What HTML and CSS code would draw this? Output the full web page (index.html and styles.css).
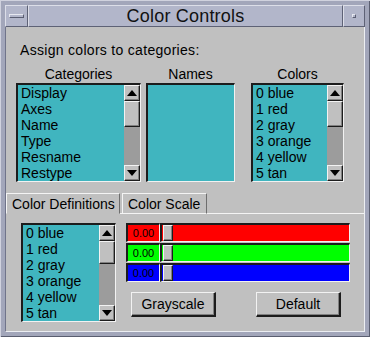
FILE: index.html
```html
<!DOCTYPE html>
<html>
<head>
<meta charset="utf-8">
<title>Color Controls</title>
<link rel="stylesheet" href="styles.css">
</head>
<body>
<div class="frame">
  <div class="titlebar">
    <div class="tb-btn tb-left"><span class="minbar"></span></div>
    <div class="tb-title">Color Controls</div>
    <div class="tb-btn tb-right"><span class="maxsq"></span></div>
  </div>
  <div class="content">
    <div class="prompt">Assign colors to categories:</div>
    <div class="lists">
      <div class="col col-cat">
        <div class="lbl">Categories</div>
        <div class="listbox lb-cat">
          <ul class="items">
            <li>Display</li><li>Axes</li><li>Name</li><li>Type</li><li>Resname</li><li>Restype</li>
          </ul>
          <div class="sb">
            <div class="sb-arrow"><svg width="10" height="6" viewBox="0 0 10 6"><polygon points="0,6 10,6 5,0"/></svg></div>
            <div class="sb-track"><div class="sb-thumb"></div></div>
            <div class="sb-arrow"><svg width="10" height="6" viewBox="0 0 10 6"><polygon points="0,0 10,0 5,6"/></svg></div>
          </div>
        </div>
      </div>
      <div class="col col-names">
        <div class="lbl">Names</div>
        <div class="listbox lb-names"></div>
      </div>
      <div class="col col-colors">
        <div class="lbl">Colors</div>
        <div class="listbox lb-colors">
          <ul class="items">
            <li>0 blue</li><li>1 red</li><li>2 gray</li><li>3 orange</li><li>4 yellow</li><li>5 tan</li>
          </ul>
          <div class="sb">
            <div class="sb-arrow"><svg width="10" height="6" viewBox="0 0 10 6"><polygon points="0,6 10,6 5,0"/></svg></div>
            <div class="sb-track"><div class="sb-thumb"></div></div>
            <div class="sb-arrow"><svg width="10" height="6" viewBox="0 0 10 6"><polygon points="0,0 10,0 5,6"/></svg></div>
          </div>
        </div>
      </div>
    </div>
    <div class="tabbar">
      <div class="tab tab-active">Color Definitions</div>
      <div class="tab-gap"></div>
      <div class="tab">Color Scale</div>
      <div class="tab-fill"></div>
    </div>
    <div class="defs">
      <div class="listbox lb-defs">
        <ul class="items">
          <li>0 blue</li><li>1 red</li><li>2 gray</li><li>3 orange</li><li>4 yellow</li><li>5 tan</li>
        </ul>
        <div class="sb">
          <div class="sb-arrow"><svg width="10" height="6" viewBox="0 0 10 6"><polygon points="0,6 10,6 5,0"/></svg></div>
          <div class="sb-track"><div class="sb-thumb sb-thumb-sm"></div></div>
          <div class="sb-arrow"><svg width="10" height="6" viewBox="0 0 10 6"><polygon points="0,0 10,0 5,6"/></svg></div>
        </div>
      </div>
      <div class="editor">
        <div class="sliders">
          <div class="srow s-red"><div class="val">0.00</div><div class="track"><div class="thumb"></div></div></div>
          <div class="srow s-green"><div class="val">0.00</div><div class="track"><div class="thumb"></div></div></div>
          <div class="srow s-blue"><div class="val">0.00</div><div class="track"><div class="thumb"></div></div></div>
        </div>
        <div class="btns">
          <button class="btn">Grayscale</button>
          <button class="btn">Default</button>
        </div>
      </div>
    </div>
  </div>
</div>
</body>
</html>
```

FILE: styles.css
```css
* {
  box-sizing: border-box;
  margin: 0;
  padding: 0;
}

html, body {
  width: 370px;
  height: 337px;
  overflow: hidden;
}

body {
  background: #a2a6ba;
  font-family: "Liberation Sans", Arial, sans-serif;
  font-size: 14px;
  color: #000;
}

.frame {
  width: 370px;
  height: 337px;
  padding: 5px;
  display: flex;
  flex-direction: column;
  background: #a2a6ba;
  box-shadow: inset 1px 1px 0 #d0d2de, inset -1px -1px 0 #5a5e70;
}

/* title bar */
.titlebar {
  height: 22px;
  flex: none;
  display: flex;
}

.tb-btn,
.tb-title {
  background: #b2b6ca;
  border: 1px solid;
  border-color: #dcdee8 #5e6276 #5e6276 #dcdee8;
}

.tb-left {
  width: 23px;
  display: flex;
  align-items: center;
  justify-content: center;
}

.tb-right {
  width: 22px;
  display: flex;
  align-items: center;
  justify-content: center;
}

.minbar {
  width: 15px;
  height: 4px;
  border: 1px solid;
  border-color: #e6e8f0 #5a5e72 #5a5e72 #e6e8f0;
}

.maxsq {
  width: 4px;
  height: 4px;
  border: 1px solid;
  border-color: #e6e8f0 #5a5e72 #5a5e72 #e6e8f0;
}

.tb-title {
  flex: 1;
  text-align: center;
  font-size: 18px;
  line-height: 20px;
  letter-spacing: 0.2px;
  color: #111;
}

/* content */
.content {
  flex: 1;
  background: #c0c0c0;
  border-left: 1px solid #70748a;
  border-right: 1px solid #eceef2;
  border-bottom: 1px solid #eceef2;
  display: flex;
  flex-direction: column;
}

.prompt {
  margin-top: 15px;
  padding-left: 14px;
  line-height: 16px;
  letter-spacing: 0.3px;
}

.lists {
  margin-top: 8px;
  padding-left: 10px;
  display: flex;
}

.col {
  display: flex;
  flex-direction: column;
}

.col-cat { width: 125px; }
.col-names { width: 89px; margin-left: 5px; }
.col-colors { width: 93px; margin-left: 16px; }

.lbl {
  text-align: center;
  line-height: 16px;
  margin-bottom: 1px;
}

.listbox {
  height: 99px;
  display: flex;
  background: #40b5bf;
  border-style: solid;
  border-width: 2px 1px 1px 2px;
  border-color: #1c1c1c #f2f2f2 #f2f2f2 #1c1c1c;
  overflow: hidden;
}

.items {
  list-style: none;
  flex: 1;
  padding-left: 3px;
  overflow: hidden;
}

.items li {
  line-height: 16px;
  white-space: nowrap;
}

/* scrollbar */
.sb {
  width: 16px;
  flex: none;
  display: flex;
  flex-direction: column;
  background: #9c9c9c;
}

.sb-arrow {
  height: 16px;
  flex: none;
  background: #c0c0c0;
  border: 1px solid;
  border-color: #f2f2f2 #1c1c1c #1c1c1c #f2f2f2;
  box-shadow: inset -1px -1px 0 #808080;
  display: flex;
  align-items: center;
  justify-content: center;
}

.sb-arrow svg {
  fill: #000;
}

.sb-track {
  flex: 1;
}

.sb-thumb {
  height: 26px;
  background: #c0c0c0;
  border: 1px solid;
  border-color: #f2f2f2 #1c1c1c #1c1c1c #f2f2f2;
  box-shadow: inset -1px -1px 0 #808080;
}

.sb-thumb-sm {
  height: 23px;
}

/* tabs */
.tabbar {
  margin-top: 11px;
  display: flex;
  align-items: flex-end;
  height: 21px;
}

.tab {
  height: 21px;
  padding: 2px 5px 0 5px;
  line-height: 16px;
  white-space: nowrap;
  border-style: solid;
  border-width: 1px 1px 1px 1px;
  border-color: #f4f4f4 #6e6e6e #f4f4f4 #f4f4f4;
}

.tab-active {
  width: 114px;
  border-bottom-color: #c0c0c0;
}

.tab + .tab-gap + .tab {
  width: 85px;
}

.tab-gap {
  width: 2px;
  height: 1px;
  background: #f4f4f4;
}

.tab-fill {
  flex: 1;
  height: 1px;
  background: #f4f4f4;
}

/* definitions */
.defs {
  margin-top: 9px;
  padding-left: 15px;
  display: flex;
}

.lb-defs {
  width: 95px;
}

.editor {
  margin-left: 10px;
  width: 224px;
  display: flex;
  flex-direction: column;
}

.sliders {
  display: flex;
  flex-direction: column;
  gap: 1px;
}

.srow {
  height: 19px;
  display: flex;
}

.val {
  width: 34px;
  font-size: 11px;
  line-height: 16px;
  text-align: center;
  color: #000;
  border-style: solid;
  border-width: 2px 1px 1px 2px;
  border-color: #1c1c1c #f2f2f2 #f2f2f2 #1c1c1c;
}

.track {
  flex: 1;
  padding: 0 0 0 1px;
  border-style: solid;
  border-width: 2px 1px 1px 2px;
  border-color: #1c1c1c #f2f2f2 #f2f2f2 #1c1c1c;
}

.s-red .val, .s-red .track { background: #ff0000; }
.s-green .val, .s-green .track { background: #00ff00; }
.s-blue .val, .s-blue .track { background: #0000ff; }

.thumb {
  width: 10px;
  height: 16px;
  background: #c0c0c0;
  border: 1px solid;
  border-color: #f2f2f2 #1c1c1c #1c1c1c #f2f2f2;
  box-shadow: inset -1px -1px 0 #808080;
}

.btns {
  margin-top: 10px;
  padding-left: 5px;
  display: flex;
  gap: 40px;
}

.btn {
  width: 85px;
  height: 25px;
  background: #c0c0c0;
  font-family: "Liberation Sans", Arial, sans-serif;
  font-size: 14px;
  color: #000;
  border-style: solid;
  border-width: 1px 2px 2px 1px;
  border-color: #f2f2f2 #1c1c1c #1c1c1c #f2f2f2;
  box-shadow: inset -1px -1px 0 #808080;
}
```
